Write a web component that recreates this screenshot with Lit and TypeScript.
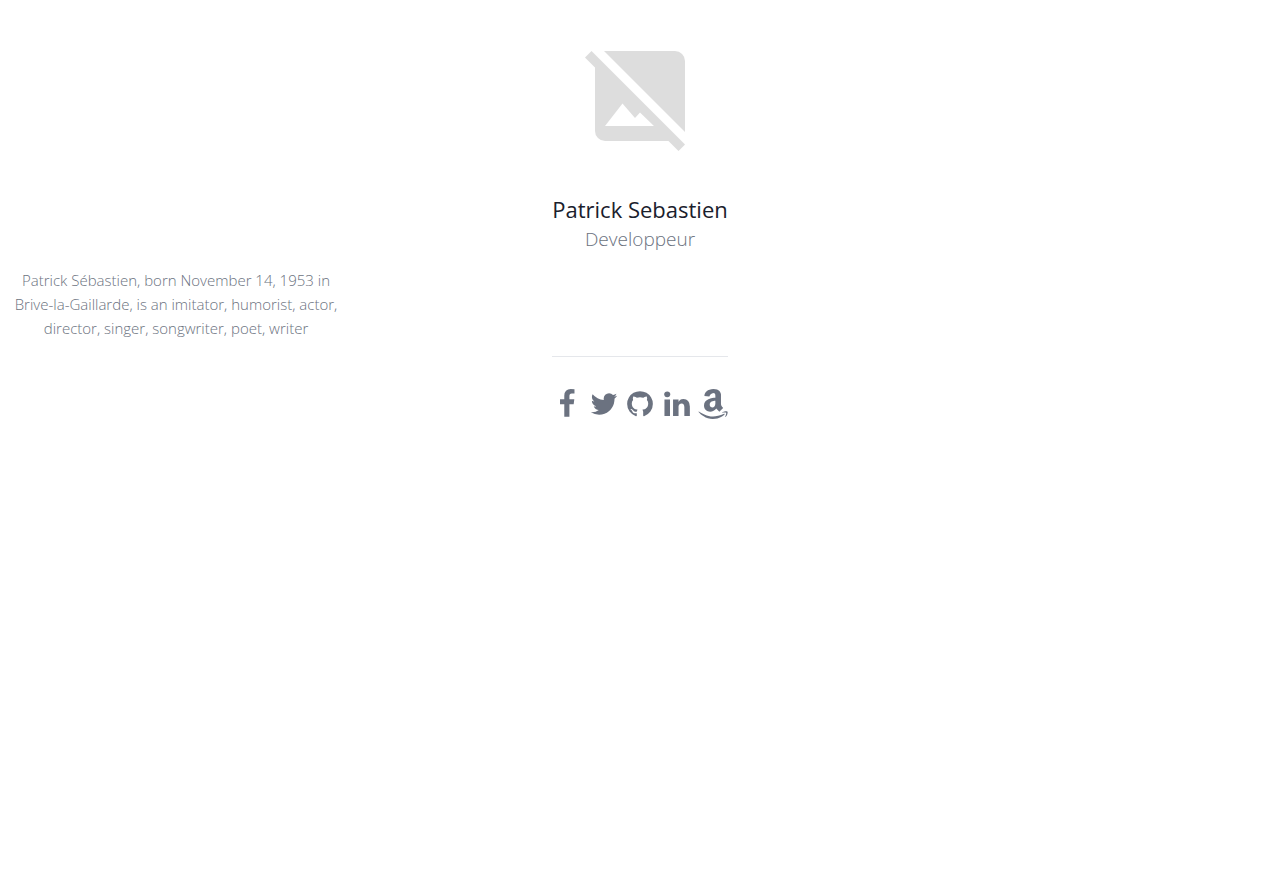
import { LitElement, html, css, svg } from "lit";
import { customElement } from "lit/decorators.js";

interface Network {
  name: string;
  viewBox: string;
  path: string;
}

const networks: Network[] = [
  {
    name: "Facebook",
    viewBox: "0 0 1792 1792",
    path: "M1343 12v264h-157q-86 0-116 36t-30 108v189h293l-39 296h-254v759h-306v-759h-255v-296h255v-218q0-186 104-288.5t277-102.5q147 0 228 12z",
  },
  {
    name: "Twitter",
    viewBox: "0 0 1792 1792",
    path: "M1684 408q-67 98-162 167 1 14 1 42 0 130-38 259.5t-115.5 248.5-184.5 210.5-258 146-323 54.5q-271 0-496-145 35 4 78 4 225 0 401-138-105-2-188-64.5t-114-159.5q33 5 61 5 43 0 85-11-112-23-185.5-111.5t-73.5-205.5v-4q68 38 146 41-66-44-105-115t-39-154q0-88 44-163 121 149 294.5 238.5t371.5 99.5q-8-38-8-74 0-134 94.5-228.5t228.5-94.5q140 0 236 102 109-21 205-78-37 115-142 178 93-10 186-50z",
  },
  {
    name: "GitHub",
    viewBox: "0 0 1792 1792",
    path: "M896 128q209 0 385.5 103t279.5 279.5 103 385.5q0 251-146.5 451.5t-378.5 277.5q-27 5-40-7t-13-30q0-3 .5-76.5t.5-134.5q0-97-52-142 57-6 102.5-18t94-39 81-66.5 53-105 20.5-150.5q0-119-79-206 37-91-8-204-28-9-81 11t-92 44l-38 24q-93-26-192-26t-192 26q-16-11-42.5-27t-83.5-38.5-85-13.5q-45 113-8 204-79 87-79 206 0 85 20.5 150t52.5 105 80.5 67 94 39 102.5 18q-39 36-49 103-21 10-45 15t-57 5-65.5-21.5-55.5-62.5q-19-32-48.5-52t-49.5-24l-20-3q-21 0-29 4.5t-5 11.5 9 14 13 12l7 5q22 10 43.5 38t31.5 51l10 23q13 38 44 61.5t67 30 69.5 7 55.5-3.5l23-4q0 38 .5 88.5t.5 54.5q0 18-13 30t-40 7q-232-77-378.5-277.5t-146.5-451.5q0-209 103-385.5t279.5-279.5 385.5-103z",
  },
  {
    name: "LinkedIn",
    viewBox: "0 0 1792 1792",
    path: "M477 625v991h-330v-991h330zm21-306q1 73-50.5 122t-135.5 49h-2q-82 0-132-49t-50-122q0-74 51.5-122.5t134.5-48.5 133 48.5 51 122.5zm1166 729v568h-329v-530q0-105-40.5-164.5t-126.5-59.5q-63 0-105.5 34.5t-63.5 85.5q-11 30-11 81v553h-329q2-399 2-647t-1-296l-1-48h329v144h-2q20-32 41-56t56.5-52 87-43.5 114.5-15.5q171 0 275 113.5t104 332.5z",
  },
  {
    name: "Amazon",
    viewBox: "-2 32 448 448",
    path: "M257.2 162.7c-48.7 1.8-169.5 15.5-169.5 117.5 0 109.5 138.3 114 183.5 43.2 6.5 10.2 35.4 37.5 45.3 46.8l56.8-56S341 288.9 341 261.4V114.3C341 89 316.5 32 228.7 32 140.7 32 94 87 94 136.3l73.5 6.8c16.3-49.5 54.2-49.5 54.2-49.5 40.7-.1 35.5 29.8 35.5 69.1zm0 86.8c0 80-84.2 68-84.2 17.2 0-47.2 50.5-56.7 84.2-57.8v40.6zm136 163.5c-7.7 10-70 67-174.5 67S34.2 408.5 9.7 379c-6.8-7.7 1-11.3 5.5-8.3C88.5 415.2 203 488.5 387.7 401c7.5-3.7 13.3 2 5.5 12zm39.8 2.2c-6.5 15.8-16 26.8-21.2 31-5.5 4.5-9.5 2.7-6.5-3.8s19.3-46.5 12.7-55c-6.5-8.3-37-4.3-48-3.2-10.8 1-13 2-14-.3-2.3-5.7 21.7-15.5 37.5-17.5 15.7-1.8 41-.8 46 5.7 3.7 5.1 0 27.1-6.5 43.1z",
  },
];

@customElement("app-root")
export class AppRoot extends LitElement {
  static styles = css`
    :host {
      display: block;
      font-family: "Segoe UI", "Open Sans", "Noto Sans", sans-serif;
      font-size: 15px;
      line-height: 24px;
      color: #6b7280;
    }
    .profile {
      display: flex;
      flex-direction: column;
      align-items: center;
      padding-top: 40px;
    }
    .photo {
      display: block;
      width: 120px;
      height: 120px;
    }
    .name {
      margin: 32px 0 0;
      font-size: 22px;
      line-height: 34px;
      font-weight: 400;
      color: #1a202c;
    }
    .role {
      margin: 0;
      font-size: 19px;
      line-height: 26px;
      font-weight: 300;
    }
    .bio {
      box-sizing: border-box;
      align-self: flex-start;
      max-width: 352px;
      margin: 16px 0 0;
      padding: 0 12px;
      font-weight: 300;
      text-align: center;
    }
    .social {
      display: flex;
      justify-content: space-between;
      width: 176px;
      margin-top: 16px;
      padding-top: 32px;
      border-top: 1px solid #e5e7eb;
    }
    .link {
      display: block;
      color: inherit;
    }
    .icon {
      display: block;
      width: 30px;
      height: 30px;
      fill: currentColor;
    }
  `;

  private renderLink(network: Network) {
    return html`<a class="link" href="#" aria-label=${network.name}>
      <svg class="icon" viewBox=${network.viewBox} aria-hidden="true">
        ${svg`<path d=${network.path}></path>`}
      </svg>
    </a>`;
  }

  render() {
    return html`
      <main class="profile">
        <svg class="photo" viewBox="0 0 120 120" role="img" aria-label="No photo" fill="#ddd">
          <path
            fill-rule="evenodd"
            d="M11.5 11 5 17.5 15 27.5V91a10 10 0 0 0 10 10H88.5L98.5 111 105 104.5ZM25 86 42.5 63.5 55 78 60 72.5 74 86Z"
          ></path>
          <path d="M24 11H95a10 10 0 0 1 10 10V92Z"></path>
        </svg>
        <h1 class="name">Patrick Sebastien</h1>
        <p class="role">Developpeur</p>
        <p class="bio">
          Patrick Sébastien, born November 14, 1953 in Brive-la-Gaillarde, is an imitator, humorist,
          actor, director, singer, songwriter, poet, writer
        </p>
        <nav class="social" aria-label="Social networks">
          ${networks.map((network) => this.renderLink(network))}
        </nav>
      </main>
    `;
  }
}
